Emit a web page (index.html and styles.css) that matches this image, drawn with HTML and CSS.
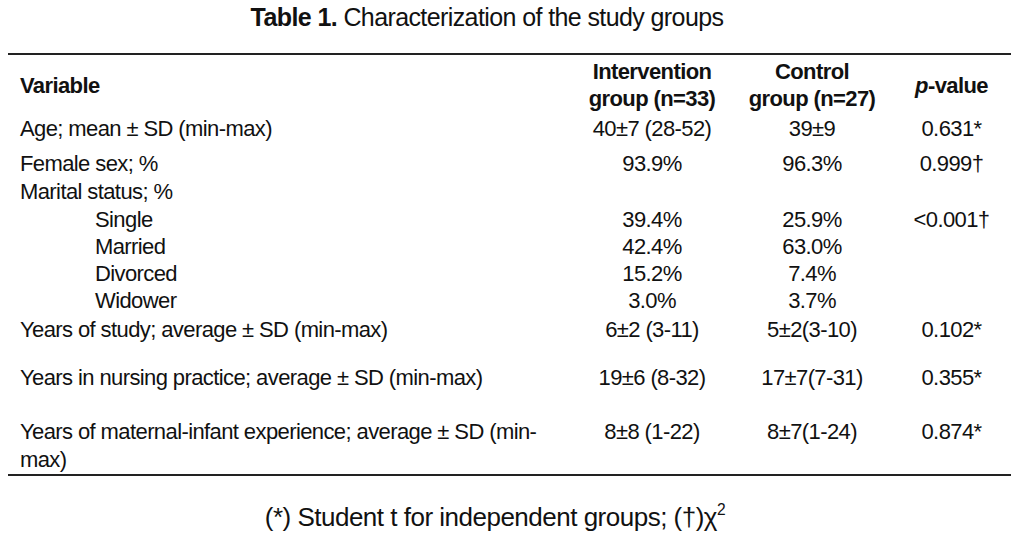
FILE: index.html
```html
<!DOCTYPE html>
<html lang="en">
<head>
<meta charset="utf-8">
<title>Table 1. Characterization of the study groups</title>
<link rel="stylesheet" href="styles.css">
</head>
<body>
<div class="page">
  <h1 class="title"><b>Table 1.</b> Characterization of the study groups</h1>
  <table class="data">
    <colgroup>
      <col class="c-var">
      <col class="c-int">
      <col class="c-ctl">
      <col class="c-p">
    </colgroup>
    <thead>
      <tr>
        <th class="h-var">Variable</th>
        <th class="h-num">Intervention<br>group (n=33)</th>
        <th class="h-num">Control<br>group (n=27)</th>
        <th class="h-num"><i>p</i>-value</th>
      </tr>
    </thead>
    <tbody>
      <tr class="r-age">
        <td class="v">Age; mean ± SD (min-max)</td>
        <td class="n">40±7 (28-52)</td>
        <td class="n">39±9</td>
        <td class="n">0.631*</td>
      </tr>
      <tr>
        <td class="v">Female sex; %</td>
        <td class="n">93.9%</td>
        <td class="n">96.3%</td>
        <td class="n">0.999†</td>
      </tr>
      <tr>
        <td class="v">Marital status; %</td>
        <td class="n"></td>
        <td class="n"></td>
        <td class="n"></td>
      </tr>
      <tr class="r-sub">
        <td class="v sub">Single</td>
        <td class="n">39.4%</td>
        <td class="n">25.9%</td>
        <td class="n">&lt;0.001†</td>
      </tr>
      <tr class="r-sub">
        <td class="v sub">Married</td>
        <td class="n">42.4%</td>
        <td class="n">63.0%</td>
        <td class="n"></td>
      </tr>
      <tr class="r-sub">
        <td class="v sub">Divorced</td>
        <td class="n">15.2%</td>
        <td class="n">7.4%</td>
        <td class="n"></td>
      </tr>
      <tr class="r-sub">
        <td class="v sub">Widower</td>
        <td class="n">3.0%</td>
        <td class="n">3.7%</td>
        <td class="n"></td>
      </tr>
      <tr class="r-study">
        <td class="v">Years of study; average ± SD (min-max)</td>
        <td class="n">6±2 (3-11)</td>
        <td class="n">5±2(3-10)</td>
        <td class="n">0.102*</td>
      </tr>
      <tr class="r-nursing">
        <td class="v">Years in nursing practice; average ± SD (min-max)</td>
        <td class="n">19±6 (8-32)</td>
        <td class="n">17±7(7-31)</td>
        <td class="n">0.355*</td>
      </tr>
      <tr class="r-maternal">
        <td class="v">Years of maternal-infant experience; average ± SD (min-max)</td>
        <td class="n">8±8 (1-22)</td>
        <td class="n">8±7(1-24)</td>
        <td class="n">0.874*</td>
      </tr>
    </tbody>
  </table>
  <p class="note">(*) Student t for independent groups; (†)χ<sup>2</sup></p>
</div>
</body>
</html>
```
FILE: styles.css
```css
html, body {
  margin: 0;
  padding: 0;
  background: #ffffff;
}

body {
  font-family: "Liberation Sans", Arial, sans-serif;
  color: #111111;
}

.page {
  width: 1018px;
  height: 543px;
  overflow: hidden;
}

.title {
  margin: 0;
  padding: 0 44px 0 0;
  font-size: 25px;
  letter-spacing: -0.6px;
  line-height: 35px;
  font-weight: normal;
  text-align: center;
}

.title b {
  font-weight: bold;
}

.data {
  margin: 18px 0 0 8px;
  width: 1003px;
  border-collapse: collapse;
  border-top: 2px solid #222222;
  border-bottom: 2px solid #222222;
  font-size: 22px;
  letter-spacing: -0.6px;
  line-height: 28px;
  table-layout: fixed;
}

.c-var { width: 564px; }
.c-int { width: 160px; }
.c-ctl { width: 160px; }
.c-p { width: 119px; }

.data th {
  font-weight: bold;
  line-height: 27px;
  padding: 3px 0 0 0;
  vertical-align: middle;
}

.h-var {
  text-align: left;
  padding-left: 12px !important;
}

.h-num {
  text-align: center;
}

.data td {
  padding: 0;
  vertical-align: top;
}

.v {
  text-align: left;
  padding-left: 12px !important;
  padding-right: 8px !important;
}

.v.sub {
  padding-left: 87px !important;
}

.n {
  text-align: center;
  white-space: nowrap;
}

.r-age td { padding-top: 3px; padding-bottom: 7px; }
.r-sub td { line-height: 27px; }
.r-study td { padding-top: 2px; }
.r-nursing td { padding-top: 20px; }
.r-maternal td { padding-top: 26px; padding-bottom: 0; }

.note {
  margin: 24px 0 0 0;
  padding: 0 28px 0 0;
  font-size: 26px;
  letter-spacing: -0.5px;
  line-height: 35px;
  text-align: center;
}

.note sup {
  font-size: 0.6em;
  line-height: 0;
  vertical-align: 0.7em;
}
```
